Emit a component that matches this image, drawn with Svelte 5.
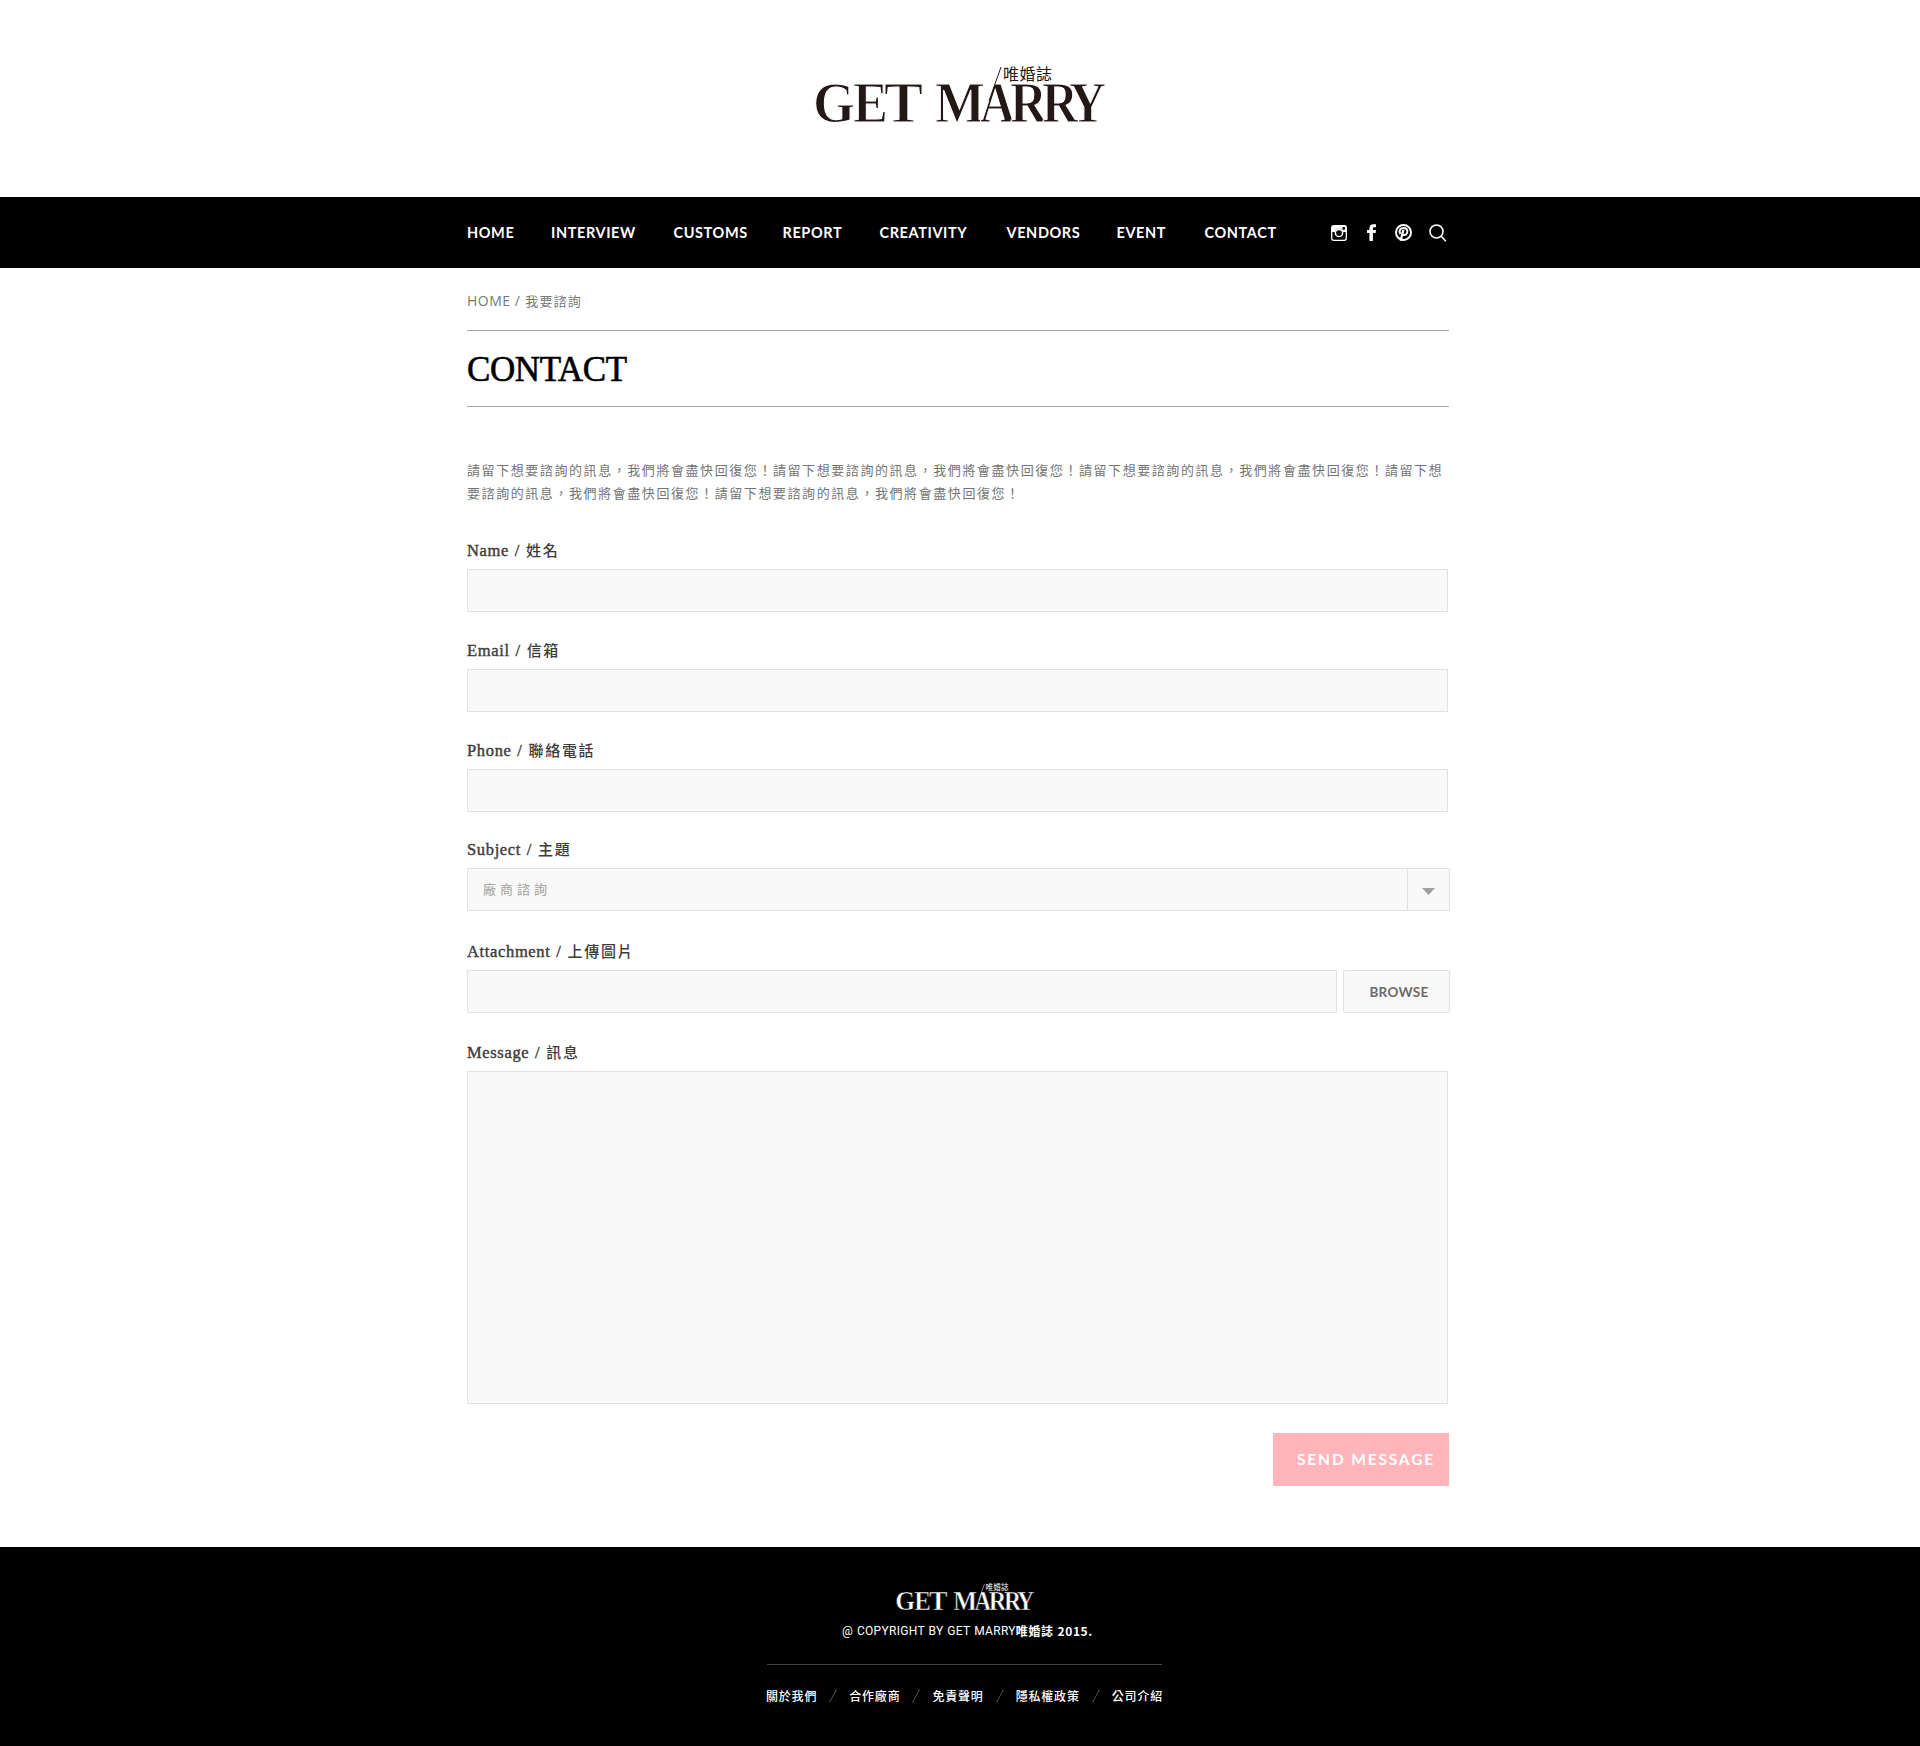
<script>
  const nav = ['HOME', 'INTERVIEW', 'CUSTOMS', 'REPORT', 'CREATIVITY', 'VENDORS', 'EVENT', 'CONTACT'];
  const links = ['關於我們', '合作廠商', '免責聲明', '隱私權政策', '公司介紹'];
  const once = '請留下想要諮詢的訊息，我們將會盡快回復您！';
  const intro = once.repeat(5);
  // Wordmark letters: glyph, left edge, advance width
  const letters = [
    ['G', -2, 42], ['E', 38, 35], ['T', 69, 39],
    ['M', 120, 50], ['A', 165, 35], ['R', 195, 37], ['R', 227, 36], ['Y', 254, 37]
  ];
</script>

{#snippet logo()}
  <svg class="logo" viewBox="0 0 290 60" role="img" aria-label="GET MARRY 唯婚誌">
    {#each letters as [glyph, x, w]}
      <text class="mark" {x} y="57" textLength={w} lengthAdjust="spacingAndGlyphs">{glyph}</text>
    {/each}
    <path d="M174 36 186 2" stroke="currentColor" stroke-width="1" fill="none" />
    <text class="sub" x="188" y="14.500" textLength="49">唯婚誌</text>
  </svg>
{/snippet}

{#snippet label(en, zh)}
  <span class="label"><span class="en">{en} /</span><span class="zh">{zh}</span></span>
{/snippet}

<header>{@render logo()}</header>

<nav>
  <div class="wrap bar">
    <div class="menu">
      {#each nav as item}<a href="#{item.toLowerCase()}">{item}</a>{/each}
    </div>
    <div class="social">
      <svg width="16" height="16" viewBox="0 0 16 16">
        <rect x=".7" y=".7" width="14.6" height="14.6" rx="2" fill="none" stroke="#fff" stroke-width="1.3" />
        <path d="M1 1h14v6H1Z" fill="#fff" />
        <rect x="11.500" y="2" width="2.500" height="2.800" rx=".5" fill="#000" />
        <circle cx="8" cy="8" r="4.300" fill="#000" />
        <circle cx="8" cy="8" r="3.600" fill="none" stroke="#fff" stroke-width="1.500" />
      </svg>
      <svg width="10" height="17" viewBox="0 0 10 17">
        <path d="M2.4 17V9H0V6h2.4V4.2C2.4 1.500 4 .3 6.300 .3H9V3.300H7.100C6.200 3.300 5.900 3.700 5.900 4.500V6H9L8.600 9H5.900v8Z" fill="#fff" />
      </svg>
      <svg width="17" height="17" viewBox="0 0 24 24" fill="none" stroke="#fff">
        <circle cx="12" cy="12" r="10.600" stroke-width="2.800" />
        <path d="M8 23.500 11.800 8" stroke-width="3.200" />
        <path d="M7.600 14C4.700 9.500 7.600 5.500 12.200 5.500c3.600 0 5.500 2.200 5.200 5.300-.3 3.200-2.300 5.200-4.500 4.800-1.200-.2-1.900-.8-2.300-1.500" stroke-width="2.800" />
      </svg>
      <svg width="18" height="18" viewBox="0 0 18 18" fill="none" stroke="#fff" stroke-width="1.600">
        <circle cx="7.500" cy="7.500" r="6.500" /><path d="m12 12 4.800 5.200" />
      </svg>
    </div>
  </div>
</nav>

<main class="wrap">
  <div class="crumbs"><span>HOME /</span><span class="here">我要諮詢</span></div>
  <h1>CONTACT</h1>
  <p>{intro}</p>

  <form>
    <label>{@render label('Name', '姓名')}<input class="box" /></label>
    <label>{@render label('Email', '信箱')}<input class="box" /></label>
    <label>{@render label('Phone', '聯絡電話')}<input class="box" /></label>
    <div class="field subject">
      {@render label('Subject', '主題')}
      <div class="select">
        <span>廠商諮詢</span>
        <i><svg width="13" height="7" viewBox="0 0 13 7"><path d="M0 0h13L6.500 7Z" fill="#a0a0a0" /></svg></i>
      </div>
    </div>
    <div class="field attach">
      {@render label('Attachment', '上傳圖片')}
      <div class="file"><input class="box" aria-label="Attachment" /><button type="button" class="browse">BROWSE</button></div>
    </div>
    <label class="message">{@render label('Message', '訊息')}<textarea class="box"></textarea></label>
    <button type="button" class="send">SEND MESSAGE</button>
  </form>
</main>

<footer>
  {@render logo()}
  <div class="copy"><span>@ COPYRIGHT BY GET MARRY</span><b>唯婚誌 2015.</b></div>
  <div class="links">
    {#each links as link, i}
      {#if i}<svg width="8" height="14" viewBox="0 0 8 14"><path d="M.5 13.500 7.500 .5" stroke="#555" fill="none" /></svg>{/if}
      <a href="#{i}">{link}</a>
    {/each}
  </div>
</footer>

<style>
  :global(body) { background: #fff; }
  :global(*) { box-sizing: border-box; }
  .wrap { width: 983px; margin-left: 467px; }
  a { color: inherit; text-decoration: none; white-space: nowrap; }

  header { height: 197px; padding: 65px 0 0 815px; color: #231815; }
  .logo { display: block; width: 290px; height: 60px; overflow: visible; fill: currentColor; }
  /* A background-coloured outline thins the bold serif and keeps touching letters apart */
  .mark { font: bold 57px 'Liberation Serif', serif; stroke: #fff; stroke-width: 1.100px; }
  footer .mark { stroke: #000; }
  .sub { font: 16px 'Noto Sans CJK TC', sans-serif; }

  nav { height: 71px; background: #000; color: #fff; }
  .bar { display: flex; height: 71px; align-items: center; }
  .menu {
    display: grid;
    grid-template-columns: 84px 122.500px 109px 97px 127px 110px 88px 126.500px;
    padding-top: 1px;
    font: bold 14.500px/20px Lato, sans-serif;
    letter-spacing: .6px;
  }
  .social { display: grid; grid-template-columns: 36px 28px 34px 18px; align-items: center; }

  .crumbs {
    display: flex; height: 62px; padding-top: 22px; gap: 5px;
    font: 14px/22px 'Open Sans', sans-serif; letter-spacing: .5px; color: #777;
  }
  .here { font: 13px/21px 'Noto Sans CJK TC', sans-serif; letter-spacing: 1.100px; }
  h1 {
    width: 982px; height: 77px; margin: 0; border: solid #aaa; border-width: 1px 0;
    font: 35px/77px 'Liberation Serif', serif; letter-spacing: -.4px; color: #000;
    -webkit-text-stroke: .6px #000;
  }
  p {
    height: 46px; margin: 51px 0 0; color: #757575; word-break: break-all; line-break: anywhere;
    font: 13px/23px 'Noto Sans CJK TC', sans-serif; letter-spacing: 1.570px;
  }

  form { display: flex; flex-direction: column; padding-top: 35px; }
  label, .field { display: block; height: 100px; }
  .label {
    display: flex; height: 30px; gap: 6px; color: #3c3c3c; white-space: nowrap;
  }
  .en {
    padding-top: 1px; font: 16.500px/22px 'Liberation Serif', serif; letter-spacing: .65px;
    word-spacing: 1px; -webkit-text-stroke: .4px #3c3c3c;
  }
  .zh { font: 500 15px/21px 'Noto Sans CJK TC', sans-serif; letter-spacing: 1.700px; }
  .box {
    display: block; width: 981px; height: 43px; margin: 0; padding: 0 15px; border: 1px solid #e2e2e2;
    border-radius: 0; background: #f9f9f9; outline: 0; resize: none;
  }
  .subject { height: 102px; margin-top: -1px; }
  .select {
    display: flex; justify-content: space-between; height: 43px; border: 1px solid #e2e2e2;
    background: #f9f9f9; color: #a0a0a0; padding-left: 15px;
    font: 13px/39px 'Noto Sans CJK TC', sans-serif; letter-spacing: 4px;
  }
  .select i { display: grid; place-items: center; width: 42px; padding-top: 3px; border-left: 1px solid #e2e2e2; }
  .attach { height: 101px; }
  .file { display: flex; justify-content: space-between; }
  .file .box { width: 870px; }
  .browse {
    width: 107px; height: 43px; padding: 0 0 0 5px; border: 1px solid #e2e2e2; border-radius: 2px;
    background: #f9f9f9; color: #6b6b6b; font: bold 13.500px/20px Lato, sans-serif; letter-spacing: .3px;
  }
  .message { height: 362px; }
  .message .box { height: 333px; }
  .send {
    align-self: flex-end; width: 176px; height: 53px; margin: 30px 1px 0 0; padding: 0 0 2px 10px; border: 0;
    background: #ffb5ba; color: #fff; font: bold 15.500px/20px Lato, sans-serif; letter-spacing: 1.850px;
  }

  footer { height: 199px; margin-top: 61px; padding-top: 36px; background: #000; color: #fff; }
  footer .logo { width: 138px; height: 28.500px; margin-left: 895.500px; }
  .copy {
    display: flex; margin: 8.500px 0 0 842px; height: 22px; white-space: nowrap;
    font: 12px/22px Roboto, sans-serif; letter-spacing: .3px; word-spacing: .6px;
  }
  .copy b { font: bold 12px/22px 'Noto Sans CJK TC', sans-serif; letter-spacing: .6px; }
  .links {
    display: flex; justify-content: space-between; align-items: center; width: 395px; height: 63px;
    margin: 22px 0 0 767px; border-top: 1px solid #444;
    font: 500 12px/20px 'Noto Sans CJK TC', sans-serif; letter-spacing: .8px;
  }
  .links a:first-of-type { margin-left: -1px; }
  .links a:last-child { margin-right: -1px; }
</style>
